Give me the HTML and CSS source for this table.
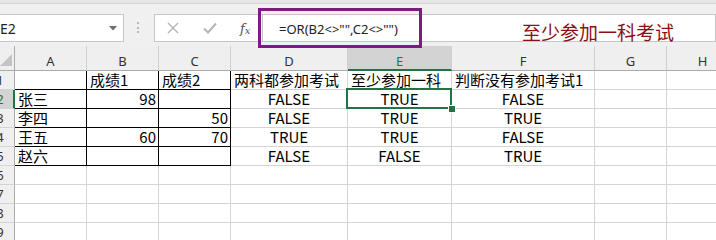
FILE: index.html
```html
<!DOCTYPE html>
<html lang="zh-CN">
	<head>
		<meta charset="UTF-8" />
		<title>Book1 - Excel</title>
		<link rel="stylesheet" href="styles.css">
	</head>
	<body>
		<div class="app">
			<div class="ribbon-edge"></div>

			<!-- name box, buttons and formula -->
			<div class="formula-bar">
				<div class="name-box">
					<span>E2</span>
					<svg width="8" height="5" viewBox="0 0 8 5"><polygon points="0,0 8,0 4,4.5" fill="#6d6d6d" /></svg>
				</div>
				<div class="grip"><span></span></div>
				<div class="fx-box">
					<svg class="btn-x" width="12" height="12" viewBox="0 0 12 12">
						<path d="M1 1 L11 11 M11 1 L1 11" stroke="#b4b4b4" stroke-width="1.4" fill="none" />
					</svg>
					<svg class="btn-ok" width="14" height="12" viewBox="0 0 14 12">
						<path d="M1 6.5 L5 10.5 L13 1.5" stroke="#b4b4b4" stroke-width="2" fill="none" />
					</svg>
					<span class="fx">f<sub>x</sub></span>
				</div>
				<div class="formula-input">=OR(B2&lt;&gt;"",C2&lt;&gt;"")</div>
			</div>

			<!-- worksheet -->
			<div class="sheet">
				<div class="corner">
					<svg width="12" height="12" viewBox="0 0 12 12"><polygon points="12,0 12,12 0,12" fill="#c3c3c3" /></svg>
				</div>
				<div class="col-hd">A</div>
				<div class="col-hd">B</div>
				<div class="col-hd">C</div>
				<div class="col-hd">D</div>
				<div class="col-hd active">E</div>
				<div class="col-hd">F</div>
				<div class="col-hd">G</div>
				<div class="col-hd">H</div>

				<div class="row-hd"><span>1</span></div>
				<div class="cell ln"></div>
				<div class="cell ln">成绩1</div>
				<div class="cell ln">成绩2</div>
				<div class="cell">两科都参加考试</div>
				<div class="cell">至少参加一科</div>
				<div class="cell">判断没有参加考试1</div>
				<div class="cell"></div>
				<div class="cell"></div>

				<div class="row-hd active"><span>2</span></div>
				<div class="cell ln">张三</div>
				<div class="cell ln num">98</div>
				<div class="cell ln"></div>
				<div class="cell mid">FALSE</div>
				<div class="cell mid selected">TRUE</div>
				<div class="cell mid">FALSE</div>
				<div class="cell"></div>
				<div class="cell"></div>

				<div class="row-hd"><span>3</span></div>
				<div class="cell ln">李四</div>
				<div class="cell ln"></div>
				<div class="cell ln num">50</div>
				<div class="cell mid">FALSE</div>
				<div class="cell mid">TRUE</div>
				<div class="cell mid">TRUE</div>
				<div class="cell"></div>
				<div class="cell"></div>

				<div class="row-hd"><span>4</span></div>
				<div class="cell ln">王五</div>
				<div class="cell ln num">60</div>
				<div class="cell ln num">70</div>
				<div class="cell mid">TRUE</div>
				<div class="cell mid">TRUE</div>
				<div class="cell mid">FALSE</div>
				<div class="cell"></div>
				<div class="cell"></div>

				<div class="row-hd"><span>5</span></div>
				<div class="cell ln">赵六</div>
				<div class="cell ln"></div>
				<div class="cell ln"></div>
				<div class="cell mid">FALSE</div>
				<div class="cell mid">FALSE</div>
				<div class="cell mid">TRUE</div>
				<div class="cell"></div>
				<div class="cell"></div>

				<div class="row-hd"><span>6</span></div>
				<div class="cell"></div><div class="cell"></div><div class="cell"></div><div class="cell"></div>
				<div class="cell"></div><div class="cell"></div><div class="cell"></div><div class="cell"></div>

				<div class="row-hd"><span>7</span></div>
				<div class="cell"></div><div class="cell"></div><div class="cell"></div><div class="cell"></div>
				<div class="cell"></div><div class="cell"></div><div class="cell"></div><div class="cell"></div>

				<div class="row-hd"><span>8</span></div>
				<div class="cell"></div><div class="cell"></div><div class="cell"></div><div class="cell"></div>
				<div class="cell"></div><div class="cell"></div><div class="cell"></div><div class="cell"></div>

				<div class="row-hd"><span>9</span></div>
				<div class="cell"></div><div class="cell"></div><div class="cell"></div><div class="cell"></div>
				<div class="cell"></div><div class="cell"></div><div class="cell"></div><div class="cell"></div>
			</div>

			<!-- annotation drawn over the formula bar -->
			<div class="callout"></div>
			<div class="note">至少参加一科考试</div>
		</div>
	</body>
</html>
```
FILE: styles.css
```css
* {
	box-sizing: border-box;
}
body {
	margin: 0;
	padding: 0;
	font-family: "Noto Sans", "Liberation Sans", sans-serif;
	background-color: #f0f0f0;
	color: #222;
}
.app {
	position: relative;
	width: 716px;
	height: 240px;
	overflow: hidden;
	background-color: #f0f0f0;
}
.ribbon-edge {
	height: 4px;
	background-color: #e6e6e6;
	border-bottom: 1px solid #d4d4d4;
}

/* formula bar */
.formula-bar {
	display: flex;
	align-items: flex-start;
	height: 42px;
	padding-top: 10px;
}
.name-box {
	width: 135px;
	height: 28px;
	margin-left: -11px;
	padding: 0 6px 0 10px;
	display: flex;
	align-items: center;
	justify-content: space-between;
	background-color: #fff;
	border: 1px solid #c6c6c6;
	font-size: 14px;
	color: #222;
}
.grip {
	width: 30px;
	padding: 8px 0 0 13px;
}
.grip span {
	display: block;
	width: 2px;
	height: 11px;
	border-left: 2px dotted #b8b8b8;
}
.fx-box {
	width: 108px;
	height: 28px;
	padding-left: 12px;
	display: flex;
	align-items: center;
	gap: 24px;
	background-color: #fff;
	border: 1px solid #c6c6c6;
	border-right: none;
}
.fx {
	font-family: "DejaVu Serif", "Liberation Serif", serif;
	font-style: italic;
	font-size: 13px;
	color: #555;
	margin-left: -1px;
}
.fx sub {
	font-size: 10px;
	vertical-align: -1px;
}
.formula-input {
	flex: 1;
	height: 28px;
	padding: 3px 0 0 16px;
	line-height: 22px;
	background-color: #fff;
	border: 1px solid #c6c6c6;
	font-size: 13px;
	color: #222;
	white-space: nowrap;
}

/* worksheet grid */
.sheet {
	display: grid;
	grid-template-columns: 15px 72px 72px 72px 117px 104px 143px 72px 72px;
	grid-template-rows: 25px repeat(9, 19px);
	width: 739px;
}
.corner,
.col-hd,
.row-hd {
	background-color: #efefef;
	border-right: 1px solid #d0d0d0;
	border-bottom: 1px solid #ababab;
}
.corner {
	display: flex;
	align-items: flex-end;
	justify-content: flex-end;
	padding: 0 2px 4px 0;
	border-right-color: #ababab;
}
.col-hd {
	padding-top: 6px;
	text-align: center;
	font-size: 13px;
	line-height: 18px;
	color: #333;
}
.col-hd.active {
	background-color: #d3d3d3;
	color: #217346;
	border-bottom: 2px solid #217346;
}
.row-hd {
	display: flex;
	overflow: hidden;
	border-right-color: #ababab;
	border-bottom-color: #d4d4d4;
	font-size: 13px;
	line-height: 18px;
	color: #333;
}
.row-hd span {
	flex: none;
	width: 30px;
	margin-left: -15px;
	text-align: center;
}
.row-hd.active {
	background-color: #d3d3d3;
	color: #217346;
	border-right: 2px solid #217346;
}
.cell {
	position: relative;
	padding: 0 3px;
	background-color: #fff;
	border-right: 1px solid #d4d4d4;
	border-bottom: 1px solid #d4d4d4;
	font-family: "Noto Sans CJK SC", "Noto Sans", sans-serif;
	font-size: 15px;
	line-height: 18px;
	color: #000;
	white-space: nowrap;
}
.cell.ln {
	border-right-color: #000;
	border-bottom-color: #000;
}
.cell.num {
	text-align: right;
	padding-right: 2px;
}
.cell.mid {
	text-align: center;
}
.cell.selected::after {
	content: "";
	position: absolute;
	top: -2px;
	left: -2px;
	right: -1px;
	bottom: -1px;
	border: 2px solid #217346;
}
.cell.selected::before {
	content: "";
	position: absolute;
	right: -4px;
	bottom: -4px;
	width: 6px;
	height: 6px;
	background-color: #217346;
	outline: 1px solid #fff;
	z-index: 1;
}

/* annotation */
.callout {
	position: absolute;
	left: 258px;
	top: 8px;
	width: 164px;
	height: 40px;
	border: 3px solid #7e1a84;
}
.note {
	position: absolute;
	left: 522px;
	top: 22px;
	font-family: "Noto Sans CJK SC", sans-serif;
	font-size: 19px;
	line-height: 20px;
	color: #8b1014;
}
```
